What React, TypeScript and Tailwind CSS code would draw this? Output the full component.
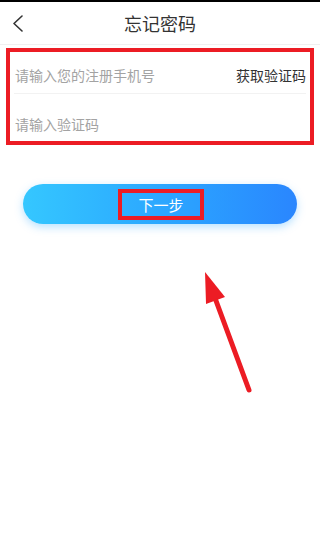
const font = { fontFamily: '"Noto Sans CJK SC", "Noto Sans", sans-serif' }

function BackIcon() {
  return (
    <svg width="12" height="17" viewBox="0 0 12 17" fill="none">
      <path d="M10 1L2 8.5L10 16" stroke="#333" strokeWidth="1.6" strokeLinecap="round" strokeLinejoin="round" />
    </svg>
  )
}

export default function App() {
  return (
    <div className="relative w-[320px] h-[550px] bg-white overflow-hidden font-['Noto_Sans_CJK_SC',sans-serif]" style={font}>
      <div className="h-[2px] bg-black" />

      <header className="grid grid-cols-[40px_1fr_40px] items-center h-[43px] border-b border-[#f0f0f0]">
        <div className="pl-[12px] pt-[1px] flex items-center">
          <BackIcon />
        </div>
        <h1 className="text-center text-[18px] text-[#333] leading-none">忘记密码</h1>
        <div />
      </header>

      <div className="mx-[6px] mt-[3px] h-[97px] border-4 border-[#ec1c24] flex flex-col px-[4px]">
        <div className="h-[42px] flex items-center justify-between border-b border-[#f2f2f2] pt-[5px] pl-[1px]">
          <span className="text-[14px] text-[#a3a3a3]">请输入您的注册手机号</span>
          <span className="text-[14px] text-[#333]">获取验证码</span>
        </div>
        <div className="flex-1 flex items-center pt-[14px] pl-[1px]">
          <span className="text-[14px] text-[#a3a3a3]">请输入验证码</span>
        </div>
      </div>

      <div className="mt-[39px] pl-[23px] pr-[23px]">
        <button className="w-full h-[40px] rounded-full bg-gradient-to-r from-[#35c7ff] to-[#2a86fe] shadow-[0_3px_8px_rgba(53,170,255,0.35)] flex items-center justify-center">
          <span className="w-[86px] h-[31px] border-4 border-[#ec1c24] flex items-center justify-center text-[15px] text-white leading-none ml-[2px]">
            下一步
          </span>
        </button>
      </div>

      <svg className="absolute left-0 top-0" width="320" height="550" viewBox="0 0 320 550">
        <line x1="215" y1="298" x2="249" y2="390" stroke="#ec1c24" strokeWidth="5" strokeLinecap="round" />
        <polygon points="205,272 206,304 225,297" fill="#ec1c24" />
      </svg>
    </div>
  )
}
